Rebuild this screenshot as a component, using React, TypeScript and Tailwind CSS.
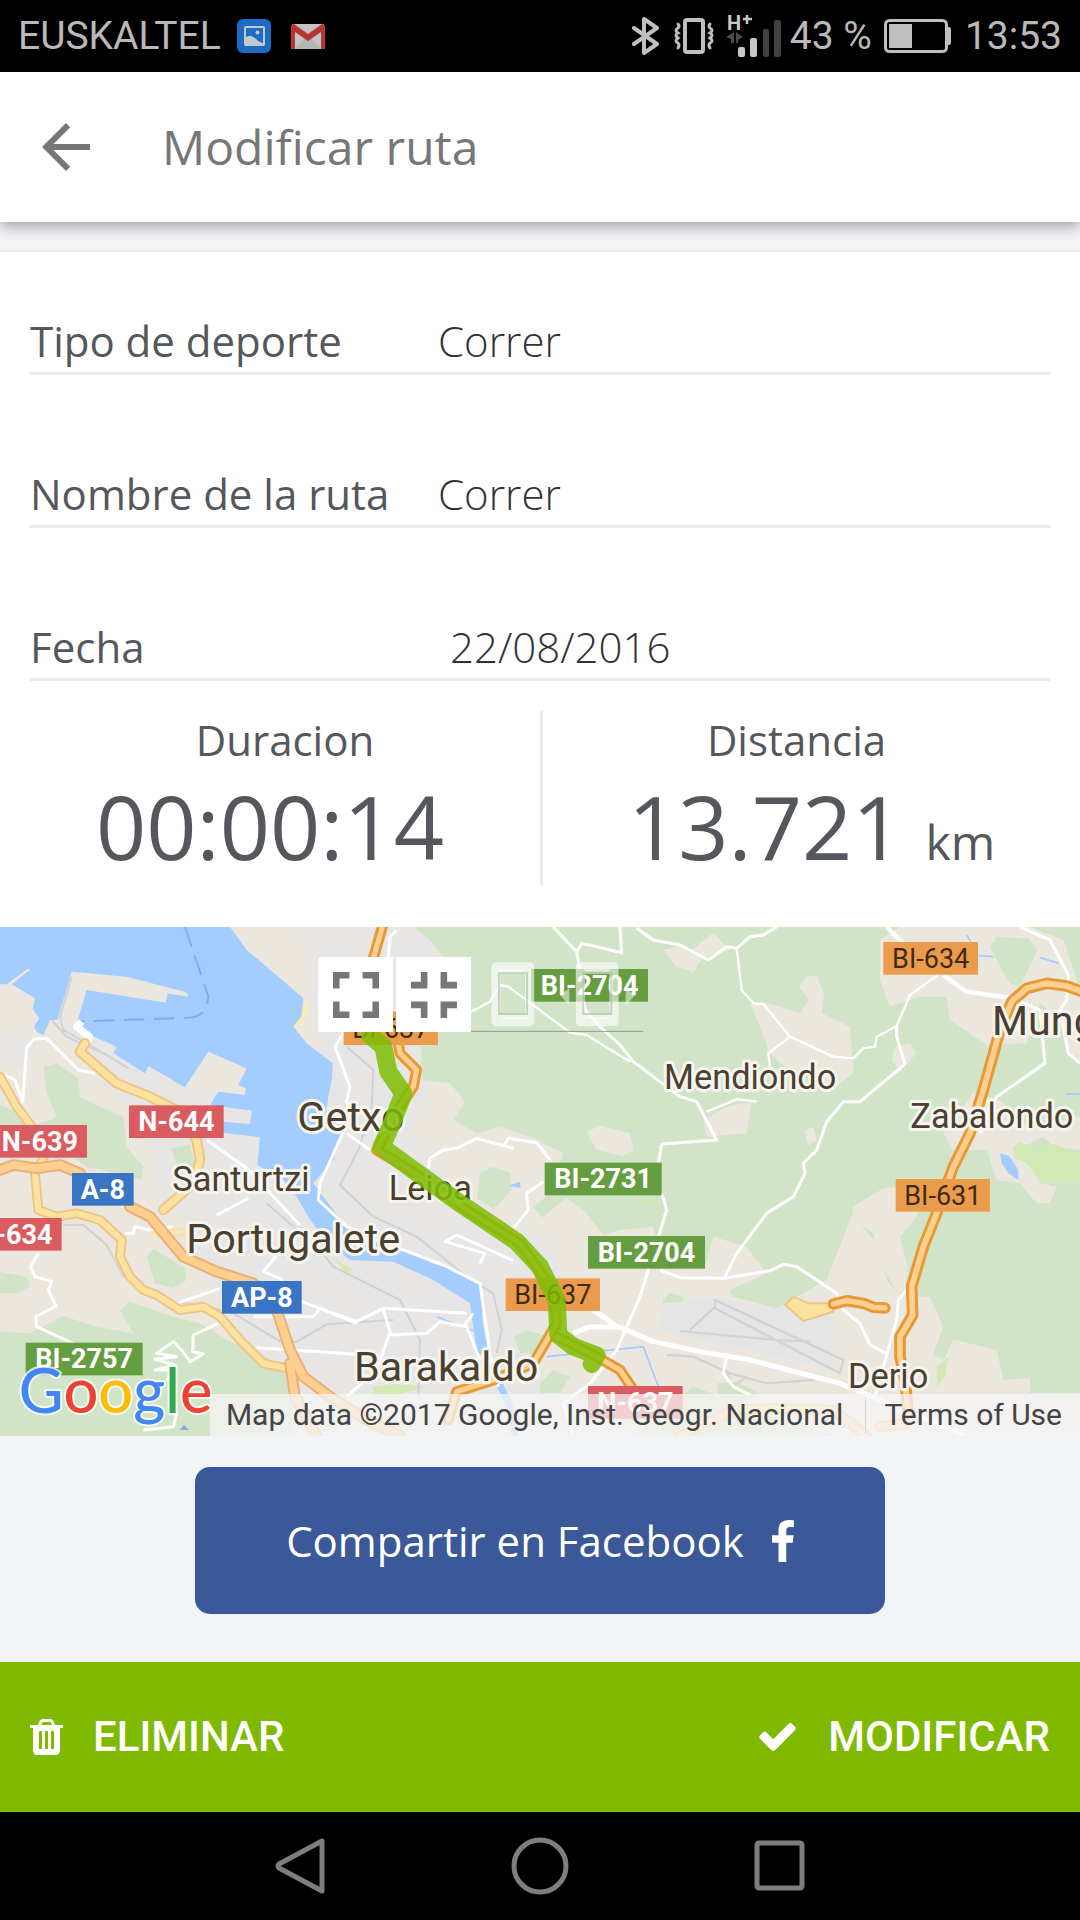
import type { FC, ReactNode } from "react";

const GREEN = '#d1e4c8'
const LAND = '#ebe7df'
const URBAN = '#e7e6e4'
const WATER = '#a3ccff'

const shieldColors = {
    red: { fill: '#da5b60', text: '#ffffff' },
    blue: { fill: '#3a74c4', text: '#ffffff' },
    green: { fill: '#659e40', text: '#ffffff' },
    orange: { fill: '#ea9c4c', text: '#3d2b12' },
}

type Shield = { text: string, x: number, y: number, w: number, color: keyof typeof shieldColors }

const shields: Shield[] = [
    { text: 'N-639', x: -22, y: 615, w: 283, color: 'red' },
    { text: 'N-644', x: 387, y: 556, w: 284, color: 'red' },
    { text: 'A-8', x: 216, y: 759, w: 185, color: 'blue' },
    { text: 'N-634', x: -99, y: 894, w: 284, color: 'red' },
    { text: 'AP-8', x: 666, y: 1083, w: 239, color: 'blue' },
    { text: 'BI-2757', x: 77, y: 1268, w: 351, color: 'green' },
    { text: 'BI-637', x: 1031, y: 277, w: 283, color: 'orange' },
    { text: 'BI-2704', x: 1594, y: 147, w: 350, color: 'green' },
    { text: 'BI-2731', x: 1634, y: 728, w: 351, color: 'green' },
    { text: 'BI-2704', x: 1764, y: 948, w: 351, color: 'green' },
    { text: 'BI-637', x: 1517, y: 1075, w: 283, color: 'orange' },
    { text: 'N-637', x: 1764, y: 1398, w: 284, color: 'red' },
    { text: 'BI-634', x: 2650, y: 66, w: 284, color: 'orange' },
    { text: 'BI-631', x: 2687, y: 777, w: 283, color: 'orange' },
]

const towns = [
    { name: 'Getxo', x: 892, y: 632, size: 124 },
    { name: 'Santurtzi', x: 517, y: 812, size: 103 },
    { name: 'Portugalete', x: 559, y: 1000, size: 124 },
    { name: 'Leioa', x: 1166, y: 839, size: 103 },
    { name: 'Barakaldo', x: 1062, y: 1382, size: 124 },
    { name: 'Mendiondo', x: 1992, y: 506, size: 103 },
    { name: 'Mungia', x: 2976, y: 345, size: 124 },
    { name: 'Zabalondo', x: 2731, y: 623, size: 103 },
    { name: 'Derio', x: 2544, y: 1403, size: 103 },
]

const Road: FC<{ d: string, fill: string, edge: string, width: number, border?: number }> = ({ d, fill, edge, width, border = 9 }) => (
    <g fill="none" strokeLinejoin="round" strokeLinecap="round">
        <path d={d} stroke={edge} strokeWidth={width + border} />
        <path d={d} stroke={fill} strokeWidth={width - border} />
    </g>
)

const RouteMap: FC = () => (
    <svg viewBox="0 21 3240 1527" className="block h-auto w-full" role="img" aria-label="Mapa de la ruta">
        <rect y="21" width="3240" height="1527" fill={LAND} />

        {/* built-up areas */}
        <g fill={URBAN}>
            <path d="M900 21H1240L1290 60L1300 330L1280 520L1230 640L1290 720L1480 890L1640 960L1690 1080L1660 1200L1560 1330L1640 1420L1560 1548H860L700 1180L560 1010L560 900L480 840L440 620L300 470L150 300L250 330L560 500L980 560Z" />
            <path d="M0 330L110 370L60 440L0 420Z" />
        </g>

        {/* sea, docks and river */}
        <path fill={WATER} d="M0 21H690L740 90L800 140L910 235L905 290L880 320L920 370L998 430L995 480L985 530L978 570L1030 630L1000 720L940 790L1000 870L1030 915L1180 975L1310 1035L1370 1050L1445 1100L1447 1200L1465 1300L1432 1305L1415 1190L1410 1150L1300 1080L1180 1025L1050 1020L970 955L925 890L890 830L850 780L772 735L780 652L668 638V605L750 612L755 572L630 555L655 515L735 525L738 505L715 495L740 445L625 395L555 502L445 438L435 460L340 400L350 380L270 345L230 310L260 210L498 248L502 220L565 230L560 217L380 170L215 155L172 300H150L130 345L110 335L102 320L118 295L98 268L105 235L35 193L90 150L85 145L20 193H0Z" />
        <path fill="none" stroke={WATER} strokeWidth="20" d="M1495 1385L1530 1460L1545 1548" />
        <path fill="none" stroke="#86a9ef" strokeWidth="6" strokeDasharray="62 28" d="M555 21L625 230Q620 290 570 293L240 304" />
        <path fill="#f7edb4" d="M912 235L922 270L912 310L890 322L882 316L905 290Z" />

        {/* woods */}
        <g fill={GREEN}>
            <path d="M130 440L170 430L235 475L240 530L300 560L370 590L380 680L430 740L425 780L380 765L260 740L200 700L130 690L110 615L170 590L140 520Z" />
            <path d="M0 555L40 570L80 615H0Z" />
            <path d="M512 685L570 672L585 740L530 730Z" />
            <path d="M440 1010L462 987L555 1045L560 1080L520 1105L465 1090Z" />
            <path d="M0 1055L80 1070L90 1100L50 1120H0Z" />
            <path d="M0 1235L90 1240L190 1188L290 1220L400 1240L360 1170L390 1145L520 1190L600 1210L690 1265L800 1310L870 1360L880 1548H0Z" />
            <path d="M1240 21H3240V1548H2500L2080 1400L1900 1548H2080L3240 1548V1420L3090 1420L3090 1375L3010 1380L2990 1300L2860 1258L2830 1320L2790 1300L2825 1210L2780 1190L2740 1240L2700 1130L2660 1080L2640 980L2560 890L2570 850L2480 1080L2330 1165L2200 1130L2190 1110L2300 1060L2240 980L2140 950L2115 1040H1985L1960 920L1860 930L1810 945L1750 870L1700 835L1625 893L1600 860L1650 820L1690 700L1600 655L1500 620L1430 640L1360 600L1395 545L1350 490L1270 480L1260 360L1330 110L1290 60Z" />
            <path d="M1440 760L1480 740L1530 760L1535 810L1480 868L1430 835Z" />
            <path d="M1988 1140L2010 1118L2050 1130V1170L2010 1182L1990 1165Z" />
            <path d="M1542 1250L1580 1230L1640 1250L1620 1300L1560 1300Z M1620 1390L1660 1350L1710 1370L1680 1420H1620Z" />
            <path d="M2150 1390L2210 1385L2280 1420L2230 1450H2160Z" />
        </g>

        {/* clearings */}
        <g fill={LAND}>
            <path d="M1760 635L1800 618L1890 640L1900 690L1870 708L1790 690Z" />
            <path d="M1990 90L2040 80L2095 110L2080 155L2030 140Z" />
            <path d="M2100 70L2140 38L2160 60L2190 90L2110 110L2080 158L2040 130Z" />
            <path d="M2250 250L2290 245L2400 280L2425 240L2398 200L2420 165L2450 170L2472 220L2465 280L2550 320L2560 460L2500 505L2340 430L2310 400L2280 320Z" />
            <path d="M2110 600L2180 560L2255 545L2240 640L2120 650Z" />
            <path d="M2412 630L2440 622L2450 660L2425 675Z" />
            <path d="M2640 60L2700 21H3090L3190 60L3240 210V430L3200 400L3180 300L3120 250L3080 370L2960 375L2850 300L2840 230L2760 230L2670 260L2640 180Z" />
            <path d="M2685 380L2730 370L2750 400L2700 455L2675 420Z" />
            <path d="M2830 640L2920 520L3000 540L3080 620L3240 590V690L3160 680L3130 650L3070 680L3120 790L3170 800L3150 850L3110 850L3060 790L2990 780L2960 690L2860 690Z" />
            <path d="M2558 860L2650 805L2700 800L2760 820L2750 890L2700 950L2725 1050L2715 1130H2790L2830 1220L2800 1300L2790 1548H2500V1300L2520 1130L2690 1120L2640 1020L2620 940L2560 900Z" />
            <path d="M2820 1350L2860 1258L2990 1290L3010 1380L3090 1375V1548H2780Z" />
        </g>
        <path fill={GREEN} d="M2970 80L2990 50L3085 55L3112 90L3060 200L3030 190L3000 140Z" />
        <g fill="#d3e9b4">
            <path d="M3038 680L3060 665L3110 690L3160 672L3240 700V785H3140L3110 770L3080 730L3045 715Z" />
            <path d="M1120 1400L1180 1392L1280 1400L1190 1425H1125Z" />
            <path d="M2810 1340L2845 1312L2835 1370L2810 1400Z" />
            <path d="M1000 1015L1060 1050L1040 1060Z M1920 850L1955 828L1985 850Z" />
        </g>
        <path fill="#e6e5e6" d="M1990 1150L2160 1135L2320 1165L2480 1165L2500 1210L2500 1350L2250 1290L2040 1245L1975 1230Z" />

        {/* streams and ponds */}
        <path fill="none" stroke={WATER} strokeWidth="5" d="M1310 1190L1420 1232M1170 1230L1145 1310M1640 1310L1930 1280L1975 1400M2900 45L2912 65M2935 107L2980 110M3120 112L3175 130M3198 522H3240" />
        <path fill={WATER} d="M3000 700L3028 708L3055 750V780L3025 760L3004 728Z M1525 797L1560 785L1562 803Z" />
        <path fill="#86a9ef" d="M540 1530L552 1514L566 1530Z" />

        {/* railways and runways */}
        <g fill="none" stroke="#d3d2d2" strokeWidth="6">
            <path d="M215 170L180 290L190 330L270 375L385 445M155 300L200 350L330 410" />
            <path d="M190 915H250L320 975L370 1070L480 1140L600 1155L700 1180L850 1270L890 1265L980 1213L1180 1200" />
            <path d="M800 850L960 990L1000 1040L1200 1140L1260 1260L1255 1430" />
            <path d="M1040 380L1120 450L1115 560L1075 690L1020 795L1120 890L1250 950L1400 1070L1480 1120L1505 1230L1490 1300" />
        </g>
        <g fill="none" stroke="#d3d3d3" strokeWidth="7">
            <path d="M2145 1140L2530 1320L2520 1360L2145 1165Z M2145 1160L2070 1230M2040 1233L2330 1260L2430 1265" />
            <path d="M2000 1305L2080 1310L2190 1360L2300 1390L2440 1380M2180 1350L2195 1400L2240 1370" />
        </g>

        {/* local roads */}
        <g fill="none" stroke="#ffffff" strokeWidth="9" strokeLinejoin="round">
            <path d="M285 460L235 450L140 355L100 358L80 385L68 545L45 480L15 465" />
            <path d="M115 1000L92 1040L105 1070L155 1085L145 1110L168 1158L108 1190L110 1220L230 1275" />
            <path strokeWidth="22" d="M245 305L230 320L268 350L262 368" />
            <path d="M620 660L740 745L900 915M650 885L745 835M375 940L400 940L405 920L450 930L520 920M530 1150L660 1105M760 1190L940 1190L960 1165L1070 1210M770 1283L1070 1303" />
            <path d="M905 1145L1070 1205L1150 1165L1400 1180M830 1005L790 1055L850 1080" />
            <path d="M655 1210L580 1245L578 1295L610 1302L570 1325L545 1290L520 1265L470 1300L530 1310L465 1318L525 1335L465 1350L525 1350L500 1380M530 1480L520 1520L430 1530" />
            <path d="M1190 30L1170 50L1165 110M1030 340L1005 380L1050 500L1040 545L1055 580L960 790L955 840L1040 920L1130 960L1330 1035L1440 1090L1470 1300L1495 1400M1040 640L1110 690" />
            <path d="M1150 1170L1170 1235L1130 1350L1040 1430M1170 1245L1280 1240L1320 1205L1400 1220L1440 1320M1420 1180L1390 1220" />
            <path d="M1285 745L1290 715L1330 690L1370 685L1430 655L1540 685M1510 680L1525 655L1610 668L1650 720M1630 785L1580 820L1585 870L1540 925M1440 1030L1455 1000L1335 965L1370 945L1540 1022" />
            <path strokeWidth="7" d="M1412 276L1470 245L1500 195L1525 200L1710 338L1760 345L1890 425" />
            <path d="M1660 21L1730 95L1745 180L1755 270L1800 320L1860 375L1900 425L2040 530L2090 545L2150 660L1985 672L1975 730M1730 95L1745 70L1865 98L1860 21M1910 25L1960 60L2040 75L2125 120L2180 80L2210 85L2250 50L2290 45L2330 21" />
            <path d="M1985 820L2000 870L1920 1130L1850 1290L1770 1390L1690 1450L1720 1548M1980 1050L2040 1073L2175 1075L2310 1052L2350 1033L2390 1040L2510 1120L2530 1170L2580 1210L2610 1275L2660 1300" />
            <path strokeWidth="15" d="M1720 1240L1770 1220L1860 1222L1960 1265L2100 1295L2250 1320L2520 1390L2640 1440L2780 1500L2900 1548M1780 1170L1860 1225" />
            <path strokeWidth="7" d="M2210 85L2225 210L2260 250L2290 252L2370 350L2500 410L2560 415L2590 385L2625 380L2630 350L2690 318L2730 225L2820 160M2370 350L2305 400L2310 440M2270 545L2210 538L2120 575" />
            <path d="M2690 318L2690 350L2715 432L2580 545L2530 545L2480 605L2450 690L2410 730L2415 760L2380 830L2300 880L2210 1000L2175 1070" />
            <path strokeWidth="13" d="M2660 21L2710 70M2830 165L2900 215L3040 235" />
            <path d="M3060 21L3150 60L3205 165L3200 240L3180 270L3205 400L3240 430M3040 235L3120 270L3135 430L2990 530L2940 640M2720 1110L2695 1140L2690 1200L2625 1430M2180 1310L2170 1360L2200 1400L2250 1425" />
        </g>

        {/* main roads */}
        <Road d="M0 470L50 560L110 640L130 715L105 760L115 870L170 890L230 880L300 900L365 960L360 1010L390 1070L430 1110L470 1125L540 1170L610 1160L660 1190L720 1260L790 1330L860 1345" fill="#fce29c" edge="#eec589" width={24} border={6} />
        <Road d="M255 370L240 395L350 490L450 530L540 575L590 660L600 720L580 790L490 870" fill="#fce29c" edge="#eec589" width={26} border={6} />
        <path d="M450 940L550 925M470 950L560 945" stroke="#fce29c" strokeWidth="10" />
        <Road d="M0 750L40 735L110 745L180 735L240 760M390 860L450 890L500 950L550 1010L650 1055L760 1090L830 1170L870 1290L910 1370L990 1430L1100 1500L1200 1548M870 1330L885 1430L950 1548" fill="#ffcf91" edge="#ecb072" width={29} border={6} />
        <Road d="M1150 10L1120 115M1180 290L1200 400L1250 450L1240 500L1200 560L1130 690L1230 750L1400 870L1560 970L1660 1110L1670 1210L1600 1330L1480 1380L1370 1415L1345 1500M1670 1250L1790 1310L1860 1350L1900 1410" fill="#ffcf91" edge="#e79a34" width={24} />
        <Road d="M2040 1548L2200 1470L2330 1465L2500 1470L2600 1548M2640 1520L2720 1510" fill="#ffd9a6" edge="#f1bf84" width={26} border={6} />
        <path d="M2355 1155L2380 1130L2425 1150L2500 1150L2500 1175L2410 1203Z" fill="#fce29c" stroke="#eec589" strokeWidth="6" />
        <Road d="M2500 1152L2540 1142L2590 1150L2620 1162L2655 1164" fill="#ffcf91" edge="#e79a34" width={25} />
        <Road d="M3260 220L3200 198L3140 190L3080 205L3035 245L3000 330L2950 510L2910 640L2860 740L2810 880L2770 980L2735 1100L2738 1185L2700 1250L2700 1310L2715 1380L2725 1480" fill="#ffcf91" edge="#e79a34" width={26} />

        {shields.map((s, i) => (
            <g key={i}>
                <rect x={s.x} y={s.y} width={s.w} height="98" fill={shieldColors[s.color].fill} />
                <text x={s.x + s.w / 2} y={s.y + 77} textAnchor="middle" fontSize="81" fill={shieldColors[s.color].text}
                    className={s.color === 'orange' ? "font-['Roboto',sans-serif] font-normal" : "font-['Roboto',sans-serif] font-bold"}>{s.text}</text>
            </g>
        ))}

        {towns.map((t) => (
            <text key={t.name} x={t.x} y={t.y} fontSize={t.size} fill="#4b4030" stroke="#f6f4ee" strokeWidth="18"
                strokeLinejoin="round" paintOrder="stroke" className="font-['Roboto',sans-serif]">{t.name}</text>
        ))}

        {/* recorded track */}
        <path d="M1110 345L1150 380L1165 455L1210 520L1180 600L1145 680L1240 750L1380 850L1550 965L1620 1040L1670 1140L1675 1245L1720 1280L1790 1306L1775 1332"
            fill="none" stroke="#7cbd03" strokeOpacity="0.85" strokeWidth="54" strokeLinejoin="round" strokeLinecap="round" />

        {/* disabled phone toggles */}
        <g fill="none" stroke="#ffffff" strokeOpacity="0.6">
            {[1475, 1728].map((x) => (
                <g key={x}>
                    <path strokeWidth="27" d={`M${x + 13} 140h101v165h-101z`} strokeLinejoin="round" />
                    <path strokeWidth="14" d={`M${x + 26} 155h75M${x + 26} 289h75`} />
                    <path stroke="#a9bba3" strokeWidth="6" d={`M${x + 22} 160h84v122h-84z`} />
                </g>
            ))}
            <path stroke="none" fill="#ffffff" fillOpacity="0.5" d="M1680 225L1708 205V258Z M1905 225L1877 205V258Z" />
        </g>
        <path d="M1410 334H1930" stroke="#8f9b8a" strokeWidth="3" />

        <text x="56" y="1480" fontSize="184" stroke="#ffffff" strokeOpacity="0.75" strokeWidth="12" paintOrder="stroke" className="font-['Lato',sans-serif] font-medium">
            <tspan fill="#4285f4">G</tspan><tspan fill="#ea4335">o</tspan><tspan fill="#fbbc05">o</tspan><tspan fill="#4285f4">g</tspan><tspan fill="#34a853">l</tspan><tspan fill="#ea4335">e</tspan>
        </text>
    </svg>
)

const StatusBar: FC = () => (
    <div className="flex h-[72px] items-center justify-between bg-black px-[18px] font-['Roboto',sans-serif] text-[39px] text-[#b9b9b9]">
        <div className="flex items-center">
            <span>EUSKALTEL</span>
            <svg className="ml-4 size-[34px]" viewBox="0 0 34 34">
                <rect width="34" height="34" rx="6" fill="#1c6cc4" />
                <rect x="8" y="8" width="19" height="18" rx="1" fill="none" stroke="#c4c9cf" strokeWidth="2" />
                <circle cx="20.500" cy="13.500" r="2" fill="#c4c9cf" />
                <path d="M8 19q4-4 8-1q3 1 5 4q3 1 6 3v2H8z" fill="#c4c9cf" />
            </svg>
            <svg className="ml-5 h-[25px] w-[34px]" viewBox="0 0 34 25">
                <path d="M1 0h32v25H1z" fill="#c4c4c4" />
                <path d="M4 25l10-11l3 2l3-2l10 11" fill="#b4b4b4" />
                <path d="M0 2v23h4V8l13 9l13-9v17h4V2q-1-2-3-2L17 10L3 0Q1 0 0 2z" fill="#b73532" />
            </svg>
        </div>
        <div className="flex items-center">
            <svg className="h-[38px] w-7" viewBox="0 0 28 38" fill="none" stroke="#bfbfbf" strokeWidth="4" strokeLinejoin="round" strokeLinecap="round">
                <path d="M2 11L25 27L12 36V2L25 11L2 27" />
            </svg>
            <svg className="ml-[14px] h-9 w-10" viewBox="0 0 40 36" fill="none" stroke="#bfbfbf">
                <rect x="11" y="2" width="18" height="32" rx="2" strokeWidth="4" />
                <path d="M4 6q2 2 0 4q-4 2 0 5q-4 2 0 5q-4 3 0 5q2 2 0 5M36 6q-2 2 0 4q4 2 0 5q4 2 0 5q4 3 0 5q-2 2 0 5" strokeWidth="3" strokeLinecap="round" />
            </svg>
            <svg className="ml-3 h-12 w-[56px] overflow-visible" viewBox="0 -2 56 48">
                <text x="1" y="16" fontSize="20" fill="#c8c8c8" className="font-['Roboto',sans-serif] font-bold">H</text>
                <path d="M17 5h9M21 1v9" stroke="#c8c8c8" strokeWidth="2.500" />
                <path d="M0 23L8 18V29H5V25zM17 23L10 18V29H12V26z" fill="#4a4a4a" />
                <rect x="12" y="33" width="7" height="10" rx="2" fill="#c8c8c8" />
                <rect x="24" y="24" width="7" height="19" rx="2" fill="#c8c8c8" />
                <rect x="37" y="15" width="6" height="28" rx="2" fill="#424242" />
                <rect x="48" y="6" width="7" height="37" rx="2" fill="#424242" />
            </svg>
            <span className="ml-2">43 %</span>
            <svg className="ml-3 h-[34px] w-[67px]" viewBox="0 0 67 34">
                <rect x="1.500" y="1.500" width="61" height="31" rx="4" fill="none" stroke="#bfbfbf" strokeWidth="3" />
                <rect x="5" y="5" width="23" height="24" fill="#bfbfbf" />
                <rect x="62" y="8" width="5" height="18" rx="2" fill="#bfbfbf" />
            </svg>
            <span className="ml-[14px]">13:53</span>
        </div>
    </div>
)

const Field: FC<{ id: string, label: string, children: ReactNode }> = ({ id, label, children }) => (
    <div className="flex items-baseline border-b-[3px] border-[#ebebeb] pb-1">
        <label htmlFor={id} className="w-[408px] shrink-0">{label}</label>
        {children}
    </div>
)

const fieldStyle = "h-[54px] min-w-0 flex-1 appearance-none bg-transparent font-light text-[#333333] outline-none"

const App: FC = () => {
    return (
        <div className="flex min-h-screen flex-col bg-[#f2f3f5] font-['Open_Sans',sans-serif] text-[42px] leading-[54px] text-[#54575c]">
            <StatusBar />
            <header className="relative z-10 flex h-[150px] items-center bg-white pl-[42px] shadow-[0_4px_14px_rgba(0,0,0,0.35)]">
                <button aria-label="Volver">
                    <svg className="size-12" viewBox="4 4 16 16" fill="#777777"><path d="M20 11H7.830l5.590-5.590L12 4l-8 8 8 8 1.410-1.410L7.830 13H20v-2z" /></svg>
                </button>
                <h1 className="ml-[72px] text-5xl text-[#777777]">Modificar ruta</h1>
            </header>

            <main className="mt-[30px] flex-1">
                <section className="bg-white pb-[42px] pt-[62px] shadow-[0_0_3px_rgba(0,0,0,0.1)]">
                    <form className="flex flex-col gap-[92px] px-[30px]">
                        <Field id="tipo" label="Tipo de deporte">
                            <select id="tipo" defaultValue="Correr" className={fieldStyle}>
                                <option>Correr</option>
                            </select>
                        </Field>
                        <Field id="nombre" label="Nombre de la ruta">
                            <input id="nombre" type="text" defaultValue="Correr" className={fieldStyle} />
                        </Field>
                        <Field id="fecha" label="Fecha">
                            <input id="fecha" type="text" defaultValue="22/08/2016" className={`${fieldStyle} pl-3`} />
                        </Field>
                    </form>
                    <div className="mt-[30px] grid grid-cols-2 text-center">
                        <div>
                            <div className="pl-[30px] leading-[57px]">Duracion</div>
                            <div className="text-[88px] leading-[117px]">00:00:14</div>
                        </div>
                        <div className="border-l-[3px] border-[#ebebeb]">
                            <div className="pr-[30px] leading-[57px]">Distancia</div>
                            <div className="text-[88px] leading-[117px]">13.721 <span className="text-5xl">km</span></div>
                        </div>
                    </div>
                </section>

                <section className="relative">
                    <RouteMap />
                    <div className="absolute left-[318px] top-[30px] flex gap-[3px]">
                        <button aria-label="Pantalla completa" className="flex size-[75px] items-center justify-center bg-white">
                            <svg className="size-[46px]" viewBox="5 5 14 14" fill="#777777"><path d="M7 14H5v5h5v-2H7v-3zm-2-4h2V7h3V5H5v5zm12 7h-3v2h5v-5h-2v3zM14 5v2h3v3h2V5h-5z" /></svg>
                        </button>
                        <button aria-label="Salir de pantalla completa" className="flex size-[75px] items-center justify-center bg-white">
                            <svg className="size-[46px]" viewBox="5 5 14 14" fill="#777777"><path d="M5 16h3v3h2v-5H5v2zm3-8H5v2h5V5H8v3zm6 11h2v-3h3v-2h-5v5zm2-11V5h-2v5h5V8h-3z" /></svg>
                        </button>
                    </div>
                    <div className="absolute bottom-0 right-0 flex h-[42px] items-center bg-[#f5f5f5]/75 font-['Roboto',sans-serif] text-[30px] text-[#444444]">
                        <span className="pl-4 pr-[22px]">Map data ©2017 Google, Inst. Geogr. Nacional</span>
                        <a href="#terms" className="border-l border-[#d8d8d0] px-[18px] leading-9">Terms of Use</a>
                    </div>
                </section>

                <div className="mb-12 mt-[31px] flex justify-center">
                    <button className="flex h-[147px] w-[690px] max-w-full items-center justify-center gap-7 rounded-[15px] bg-[#3b5998] text-white">
                        Compartir en Facebook
                        <svg className="h-[42px] w-[22px]" viewBox="479 0 864 1664" fill="currentColor"><path d="M1343 12v264h-157q-86 0-116 36t-30 108v189h293l-39 296h-254v759h-306v-759h-255v-296h255v-218q0-186 104-288.500t277-102.500q147 0 228 12z" /></svg>
                    </button>
                </div>
            </main>

            <footer>
                <div className="flex h-[150px] items-center justify-between bg-[#80ba00] px-[30px] font-['Roboto',sans-serif] font-medium text-white">
                    <button className="flex items-center gap-[30px]">
                        <svg className="h-9 w-[33px]" viewBox="192 128 1408 1536" fill="currentColor"><path d="M704 1376v-704q0-14-9-23t-23-9h-64q-14 0-23 9t-9 23v704q0 14 9 23t23 9h64q14 0 23-9t9-23zm256 0v-704q0-14-9-23t-23-9h-64q-14 0-23 9t-9 23v704q0 14 9 23t23 9h64q14 0 23-9t9-23zm256 0v-704q0-14-9-23t-23-9h-64q-14 0-23 9t-9 23v704q0 14 9 23t23 9h64q14 0 23-9t9-23zm-544-992h448l-48-117q-7-9-17-11h-317q-10 2-17 11zm928 32v64q0 14-9 23t-23 9h-96v948q0 83-47 143.500t-113 60.500h-832q-66 0-113-58.500t-47-141.500v-952h-96q-14 0-23-9t-9-23v-64q0-14 9-23t23-9h309l70-167q15-37 54-63t79-26h320q40 0 79 26t54 63l70 167h309q14 0 23 9t9 23z" /></svg>
                        ELIMINAR
                    </button>
                    <button className="flex items-center gap-8">
                        <svg className="h-7 w-[37px]" viewBox="121 334 1550 1188" fill="currentColor"><path d="M1671 566q0 40-28 68l-724 724-136 136q-28 28-68 28t-68-28l-136-136-362-362q-28-28-28-68t28-68l136-136q28-28 68-28t68 28l294 295 656-657q28-28 68-28t68 28l136 136q28 28 28 68z" /></svg>
                        MODIFICAR
                    </button>
                </div>
                <nav className="flex h-[108px] justify-center bg-black">
                    <button aria-label="Atrás" className="flex w-60 items-center justify-center">
                        <svg className="size-[58px]" viewBox="0 0 58 58" fill="none" stroke="#7e7e7e" strokeWidth="5" strokeLinejoin="round"><path d="M51 4V54L8 31Q6 29 8 27Z" /></svg>
                    </button>
                    <button aria-label="Inicio" className="flex w-60 items-center justify-center">
                        <svg className="size-[58px]" viewBox="0 0 58 58" fill="none" stroke="#7e7e7e" strokeWidth="5"><circle cx="29" cy="29" r="26" /></svg>
                    </button>
                    <button aria-label="Recientes" className="flex w-60 items-center justify-center">
                        <svg className="size-[58px]" viewBox="0 0 58 58" fill="none" stroke="#7e7e7e" strokeWidth="5"><rect x="6" y="6" width="45" height="45" rx="2" /></svg>
                    </button>
                </nav>
            </footer>
        </div>
    )
}

export default App;
